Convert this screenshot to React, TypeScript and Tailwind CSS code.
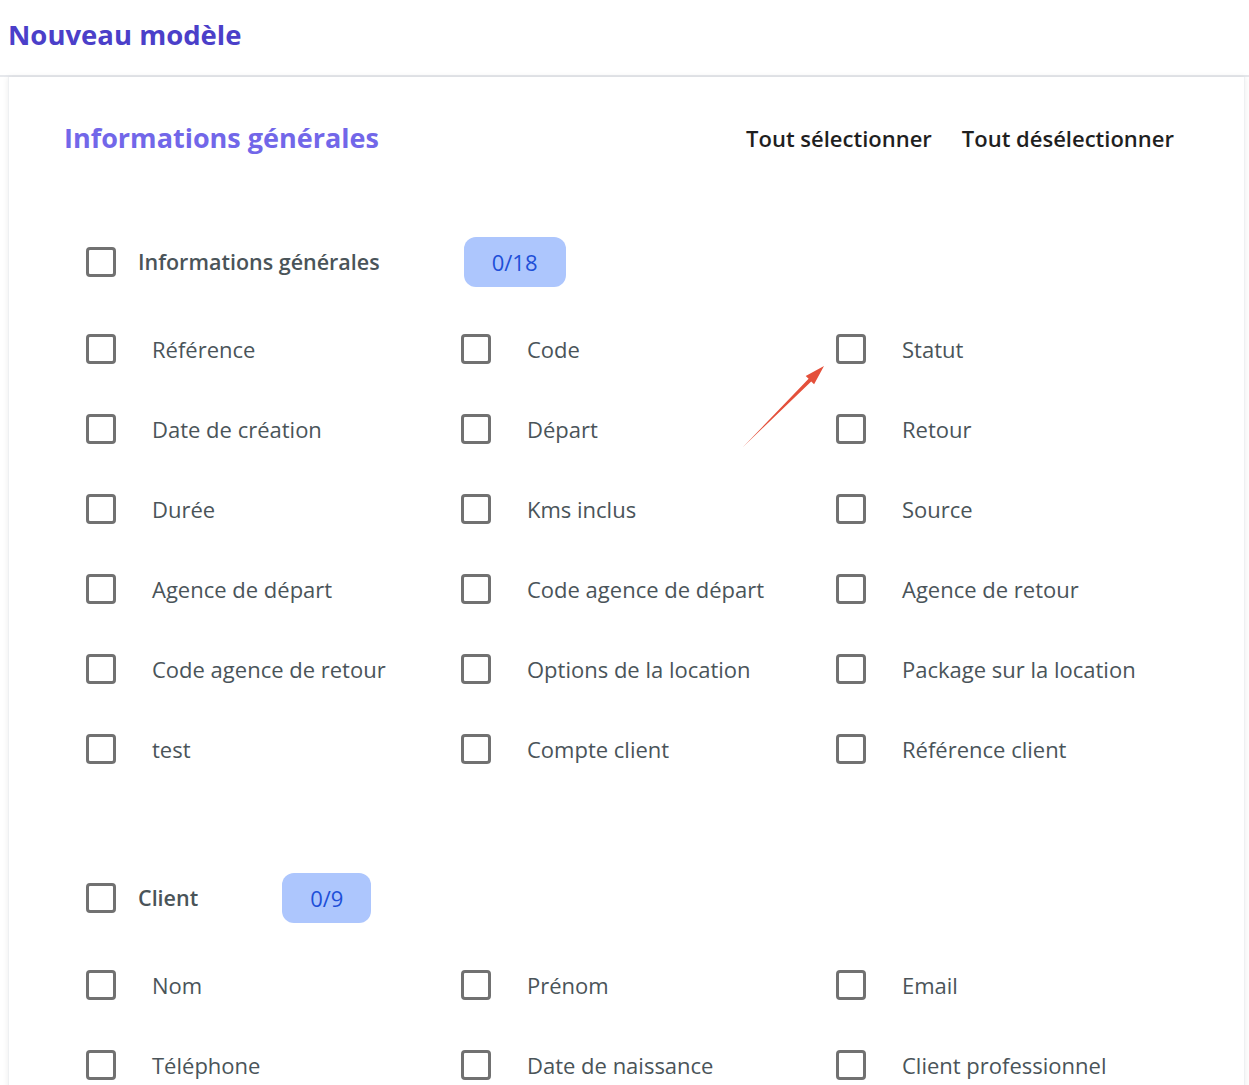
import React from 'react'

type Groupe = {
  titre: string
  champs: string[]
}

const groupes: Groupe[] = [
  {
    titre: 'Informations générales',
    champs: [
      'Référence', 'Code', 'Statut',
      'Date de création', 'Départ', 'Retour',
      'Durée', 'Kms inclus', 'Source',
      'Agence de départ', 'Code agence de départ', 'Agence de retour',
      'Code agence de retour', 'Options de la location', 'Package sur la location',
      'test', 'Compte client', 'Référence client',
    ],
  },
  {
    titre: 'Client',
    champs: [
      'Nom', 'Prénom', 'Email',
      'Téléphone', 'Date de naissance', 'Client professionnel',
      'Adresse', 'Code postal', 'Ville',
    ],
  },
]

function Checkbox() {
  return <span className="block w-[30px] h-[30px] shrink-0 rounded-[4px] border-[3px] border-[#717171] bg-white" />
}

function Section({ groupe }: { groupe: Groupe }) {
  return (
    <div className="pl-[77px]">
      <div className="flex items-center h-[50px]">
        <Checkbox />
        <span className="ml-[22px] text-[21.5px] font-semibold text-[#4a5459]">{groupe.titre}</span>
        <span className="ml-[84px] h-[50px] px-[28px] flex items-center rounded-[12px] bg-[#adc6fd] text-[22px] text-[#1e4fd8]">
          0/{groupe.champs.length}
        </span>
      </div>
      <div className="mt-[47px] grid grid-cols-[375px_375px_375px] gap-y-[50px]">
        {groupe.champs.map((c) => (
          <label key={c} className="flex items-center h-[30px]">
            <Checkbox />
            <span className="ml-[36px] text-[22px] leading-[30px] text-[#4a5459] whitespace-nowrap">{c}</span>
          </label>
        ))}
      </div>
    </div>
  )
}

export default function App() {
  return (
    <div className="h-[1085px] overflow-hidden bg-white" style={{ fontFamily: '"Open Sans", "Noto Sans", sans-serif' }}>
      <header className="h-[77px] border-b-2 border-[#e6e8ec] pl-2 pb-[6px] flex items-center">
        <h1 className="text-[27.5px] font-bold text-[#4b3fc9]">Nouveau modèle</h1>
      </header>

      <main className="relative ml-2 mr-1 h-[1200px] bg-white shadow-[0_0_6px_rgba(0,0,0,0.08)] border-x border-[#eef0f2]">
        <div className="flex items-center justify-between pt-[44px] pl-[55px] pr-[70px]">
          <h2 className="text-[27px] leading-[34px] font-bold text-[#7267e9]">Informations générales</h2>
          <div className="flex items-center gap-[30px] text-[22px] font-semibold text-[#1f1f1f]">
            <button>Tout sélectionner</button>
            <button>Tout désélectionner</button>
          </div>
        </div>

        <div className="mt-[82px]">
          <Section groupe={groupes[0]} />
        </div>
        <div className="mt-[109px]">
          <Section groupe={groupes[1]} />
        </div>

        {/* flèche annotation */}
        <svg className="absolute left-[730px] top-[285px]" width="100" height="90" viewBox="0 0 100 90">
          <polygon points="4,85 72.2,19.4 75.1,22.3 85,4 66.7,13.9 69.6,16.8" fill="#e4503b" />
        </svg>
      </main>
    </div>
  )
}
